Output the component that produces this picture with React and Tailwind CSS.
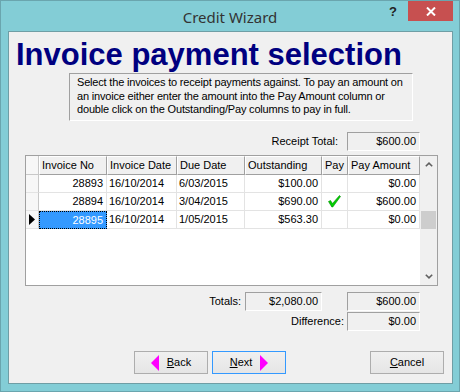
const cols = [
  { key: 'no', label: 'Invoice No', w: 'w-[68px]', align: 'right' },
  { key: 'date', label: 'Invoice Date', w: 'w-[70px]', align: 'left' },
  { key: 'due', label: 'Due Date', w: 'w-[68px]', align: 'left' },
  { key: 'out', label: 'Outstanding', w: 'w-[77px]', align: 'right' },
  { key: 'pay', label: 'Pay', w: 'w-[26px]', align: 'center' },
  { key: 'amt', label: 'Pay Amount', w: 'w-[72px]', align: 'right' },
]

const rows = [
  { no: '28893', date: '16/10/2014', due: '6/03/2015', out: '$100.00', pay: false, amt: '$0.00' },
  { no: '28894', date: '16/10/2014', due: '3/04/2015', out: '$690.00', pay: true, amt: '$600.00' },
  { no: '28895', date: '16/10/2014', due: '1/05/2015', out: '$563.30', pay: false, amt: '$0.00', current: true },
]

function Check() {
  return (
    <svg width="13" height="13" viewBox="0 0 13 13">
      <path d="M0.5 6.5 L2.5 5.5 L4.5 8.5 L11.5 0.5 L12.5 1.5 L4.8 12 L3.8 12 Z" fill="#00d000" stroke="#008a00" strokeWidth="0.6" />
    </svg>
  )
}

function Chevron({ down }) {
  return (
    <svg width="8" height="5" viewBox="0 0 8 5" className={down ? 'rotate-180' : ''}>
      <polyline points="0.8,4.3 4,1.2 7.2,4.3" fill="none" stroke="#606060" strokeWidth="1.6" />
    </svg>
  )
}

function Sunken({ w, children }) {
  return (
    <div className={`${w} h-[19px] flex items-center justify-end pr-[3px] border border-t-[#a0a0a0] border-l-[#a0a0a0] border-r-white border-b-white`}>
      {children}
    </div>
  )
}

function Button({ focused, children }) {
  return (
    <div
      className={`w-[74px] h-[23px] flex items-center justify-center gap-[8px] border bg-gradient-to-b from-[#f0f0f0] to-[#e5e5e5] ${
        focused ? 'border-[#3399ff]' : 'border-[#adadad]'
      }`}
    >
      {children}
    </div>
  )
}

function Tri({ left }) {
  return (
    <svg width="8" height="16" viewBox="0 0 8 16">
      <polygon points={left ? '8,0 8,16 0,8' : '0,0 0,16 8,8'} fill="#ff00ff" />
    </svg>
  )
}

export default function App() {
  const alignCls = { left: 'justify-start pl-[2px]', right: 'justify-end pr-[3px]', center: 'justify-center' }
  return (
    <div className="w-[460px] h-[392px] bg-[#83cdd6] border border-[#6aa5ae] flex flex-col font-['Liberation_Sans',Arial,sans-serif] text-[11px] text-black">
      <div className="h-[30px] flex">
        <div className="flex-1" />
        <div className="pt-[6px] text-[15px] leading-[20px] text-[#333] font-['Noto_Sans',sans-serif]">Credit Wizard</div>
        <div className="flex-1 flex justify-end items-start">
          <div className="mt-[4px] mr-[11px] text-[13px] leading-[14px] font-bold text-[#222]">?</div>
          <div className="mr-[6px] w-[45px] h-[20px] bg-[#c75050] flex items-center justify-center">
            <svg width="10" height="9" viewBox="0 0 10 9">
              <path d="M1 0.5 L9 8.5 M9 0.5 L1 8.5" stroke="white" strokeWidth="2" />
            </svg>
          </div>
        </div>
      </div>

      <div className="ml-[7px] w-[445px] h-[353px] border border-[#6f9ea5] bg-[#f0f0f0] flex flex-col">
        <h1 className="mt-[7px] ml-[7px] text-[31px] leading-[31px] font-bold text-[#000080]">Invoice payment selection</h1>

        <div className="mt-[3px] ml-[60px] w-[344px] h-[48px] border border-t-[#a0a0a0] border-l-[#a0a0a0] border-r-white border-b-white pl-[7px] pt-[2px] leading-[13.5px] tracking-[-0.18px]">
          Select the invoices to receipt payments against. To pay an amount on an invoice either enter the amount into the Pay Amount column or double click on the Outstanding/Pay columns to pay in full.
        </div>

        <div className="mt-[11px] pr-[32px] flex justify-end items-center gap-[9px]">
          <span>Receipt Total:</span>
          <Sunken w="w-[73px]">$600.00</Sunken>
        </div>

        <div className="mt-[4px] ml-[16px] w-[413px] h-[131px] border border-[#a0a0a0] bg-white flex">
          <div className="w-[394px] flex flex-col">
            <div className="h-[19px] flex">
              <div className="w-[13px] border-r border-b border-[#c8c8c8] bg-[#f7f7f7]" />
              {cols.map((c) => (
                <div
                  key={c.key}
                  className={`${c.w} flex items-center pl-[2px] border-l border-t border-l-white border-t-white border-r border-b border-r-[#a0a0a0] border-b-[#a0a0a0] bg-[#f0f0f0] whitespace-nowrap`}
                >
                  {c.label}
                </div>
              ))}
            </div>
            {rows.map((r) => (
              <div key={r.no} className="h-[18px] flex">
                <div className="w-[13px] flex items-center justify-center border-r border-b border-r-[#c8c8c8] border-b-[#e3e3e3] bg-[#f7f7f7]">
                  {r.current && (
                    <svg width="6" height="11" viewBox="0 0 6 11">
                      <polygon points="0,0 6,5.5 0,11" fill="black" />
                    </svg>
                  )}
                </div>
                {cols.map((c) => {
                  const sel = r.current && c.key === 'no'
                  return (
                    <div
                      key={c.key}
                      className={`${c.w} flex items-center ${alignCls[c.align]} whitespace-nowrap ${
                        sel ? 'bg-[#3399ff] text-white border border-dotted border-black' : 'border-r border-b border-[#e3e3e3]'
                      }`}
                    >
                      {c.key === 'pay' ? r.pay && <Check /> : r[c.key]}
                    </div>
                  )
                })}
              </div>
            ))}
          </div>
          <div className="w-[17px] bg-[#f0f0f0] flex flex-col">
            <div className="h-[17px] flex items-center justify-center">
              <Chevron />
            </div>
            <div className="flex-1">
              <div className="mt-[38px] mx-[1px] h-[18px] bg-[#cdcdcd]" />
            </div>
            <div className="h-[17px] flex items-center justify-center">
              <Chevron down />
            </div>
          </div>
        </div>

        <div className="mt-[6px] pr-[32px] flex justify-end items-center">
          <span>Totals:</span>
          <div className="ml-[4px]">
            <Sunken w="w-[77px]">$2,080.00</Sunken>
          </div>
          <div className="ml-[25px]">
            <Sunken w="w-[73px]">$600.00</Sunken>
          </div>
        </div>
        <div className="mt-[1px] pr-[32px] flex justify-end items-center gap-[3px]">
          <span>Difference:</span>
          <Sunken w="w-[73px]">$0.00</Sunken>
        </div>

        <div className="mt-[20px] flex">
          <div className="ml-[125px]">
            <Button>
              <Tri left />
              <span>
                <span className="underline">B</span>ack
              </span>
            </Button>
          </div>
          <div className="ml-[4px]">
            <Button focused>
              <span>
                <span className="underline">N</span>ext
              </span>
              <Tri />
            </Button>
          </div>
          <div className="ml-[84px]">
            <Button>
              <span>
                <span className="underline">C</span>ancel
              </span>
            </Button>
          </div>
        </div>
      </div>
    </div>
  )
}
